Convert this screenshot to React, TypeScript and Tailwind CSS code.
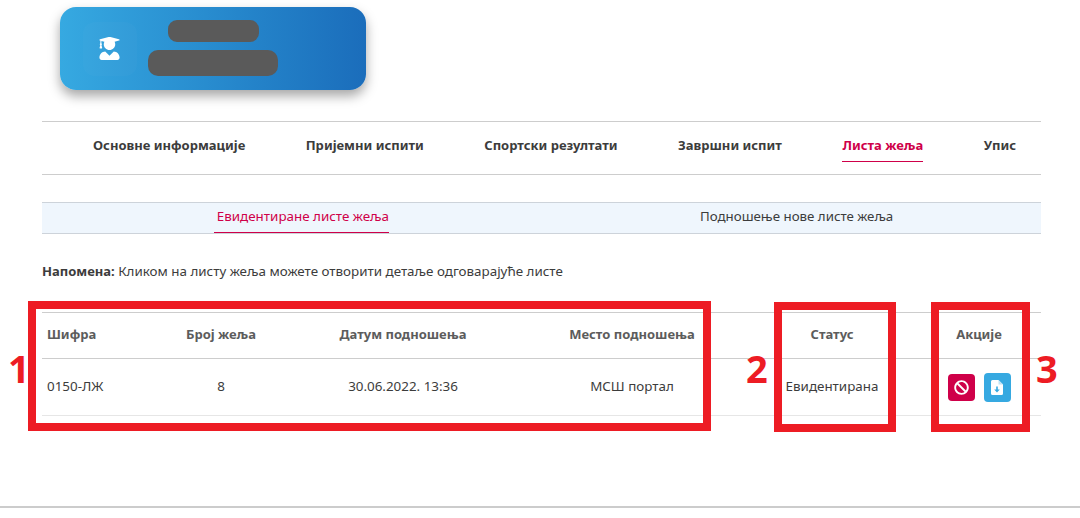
import { FaBan, FaUserGraduate } from "react-icons/fa";

const navItems = ["Основне информације", "Пријемни испити", "Спортски резултати", "Завршни испит", "Листа жеља", "Упис"];

const rowGrid = "grid grid-cols-[128px_102px_262px_196px_204px_90px_17px] items-center";

function Marker({ className, label, labelClass }: { className: string; label: string; labelClass: string }) {
  return (
    <>
      <div className={`absolute border-[8px] border-[#ed1c24] ${className}`} />
      <div className={`absolute font-['Open_Sans',sans-serif] text-[38px] leading-none font-bold text-[#ed1c24] ${labelClass}`}>{label}</div>
    </>
  );
}

export default function App() {
  return (
    <div className="relative h-[518px] w-[1080px] overflow-hidden bg-white font-['Noto_Sans',sans-serif] text-[13.4px] text-[#3c3c3c]">
      <div className="pt-[7px] pl-[60px]">
        <div className="flex h-[83px] w-[306px] rounded-[16px] bg-gradient-to-r from-[#36a9e1] to-[#1b6dbb] pl-[23px] shadow-[0_6px_12px_rgba(0,0,0,0.35)]">
          <div className="mt-[15px] flex h-[54px] w-[54px] items-center justify-center rounded-[12px] bg-white/[0.02] pr-[2px] pb-[1px]">
            <FaUserGraduate className="text-[23px] text-white" />
          </div>
          <div className="ml-[11px] flex w-[130px] flex-col items-center pt-[13px]">
            <div className="h-[22px] w-[91px] rounded-[9px] bg-[#5a5a5a]" />
            <div className="mt-[8px] h-[26px] w-[130px] rounded-[10px] bg-[#5a5a5a]" />
          </div>
        </div>
      </div>

      <div className="mt-[31px] ml-[42px] w-[999px]">
        <nav className="flex h-[54px] border-y border-[#cdcdcd] pt-[14px] pr-[25px] pl-[51px]">
          <div className="flex w-full justify-between text-[13px] leading-[18px] font-bold">
            {navItems.map((item, i) => (
              <div key={item} className={i === 4 ? "h-[26px] border-b border-[#cf0049] text-[#cf0049]" : ""}>
                {item}
              </div>
            ))}
          </div>
        </nav>

        <div className="mt-[27px] flex h-[32px] border-y border-[#cdd3da] bg-[#eff6fd]">
          <div className="ml-[172px] flex w-[175px] items-center justify-end border-b border-[#cf0049] pb-[2px] text-[#cf0049]">
            Евидентиране листе жеља
          </div>
          <div className="ml-[311px] flex items-center pb-[2px] text-[13.3px]">Подношење нове листе жеља</div>
        </div>

        <p className="mt-[28px] leading-[18px]">
          <b className="text-[13px]">Напомена:</b> Кликом на листу жеља можете отворити детаље одговарајуће листе
        </p>

        <div className="mt-[32px] border-t border-[#cdcdcd]">
          <div className={`${rowGrid} h-[46px] border-b border-[#cdcdcd] pb-[2px] text-center text-[13px] font-bold text-[#5c5c5c]`}>
            <div className="pl-[5px] text-left">Шифра</div>
            <div>Број жеља</div>
            <div>Датум подношења</div>
            <div>Место подношења</div>
            <div>Статус</div>
            <div>Акције</div>
          </div>
          <div className={`${rowGrid} h-[57px] border-b border-[#e6e6e6] text-center`}>
            <div className="pb-[2px] pl-[5px] text-left">0150-ЛЖ</div>
            <div className="pb-[2px]">8</div>
            <div className="pb-[2px]">30.06.2022. 13:36</div>
            <div className="pb-[2px]">МСШ портал</div>
            <div className="pb-[2px]">Евидентирана</div>
            <div className="flex items-center justify-center gap-[9px]">
              <button className="flex h-[27px] w-[27px] items-center justify-center rounded-[4px] bg-[#cf0049] text-[15px] text-white">
                <FaBan />
              </button>
              <button className="flex h-[29px] w-[27px] items-center justify-center rounded-[4px] bg-[#36a9e1]">
                <svg width="12" height="15" viewBox="0 0 12 15">
                  <path d="M0 1.5A1.5 1.5 0 0 1 1.500 0H7.500L12 4.500V13.500A1.500 1.500 0 0 1 10.500 15H1.500A1.500 1.500 0 0 1 0 13.500Z" fill="#fff" />
                  <path d="M7.500 0V4.500H12Z" fill="#bfe3f6" />
                  <path d="M5.200 6.500H6.800V9.500H8.800L6 12.500L3.200 9.500H5.200Z" fill="#36a9e1" />
                </svg>
              </button>
            </div>
          </div>
        </div>
      </div>

      <div className="absolute bottom-[10px] left-0 h-[2px] w-full bg-[#cccccc]" />

      <Marker className="top-[301px] left-[28px] h-[130px] w-[683px]" label="1" labelClass="top-[349px] left-[8px]" />
      <Marker className="top-[302px] left-[774px] h-[130px] w-[122px]" label="2" labelClass="top-[349px] left-[746px]" />
      <Marker className="top-[302px] left-[931px] h-[130px] w-[99px]" label="3" labelClass="top-[349px] left-[1036px]" />
    </div>
  );
}
